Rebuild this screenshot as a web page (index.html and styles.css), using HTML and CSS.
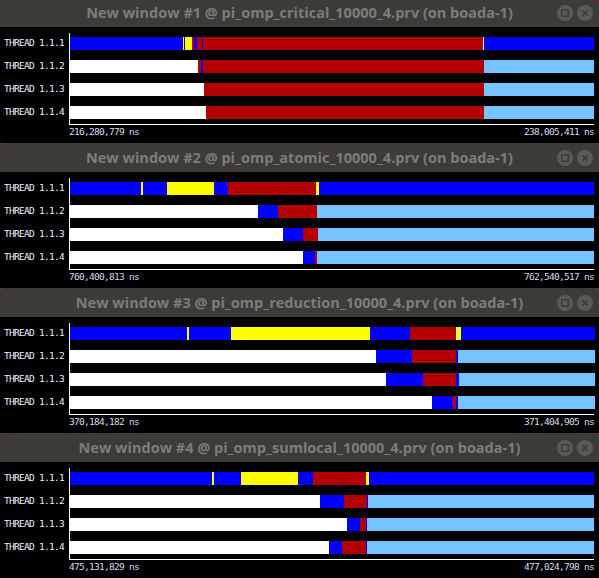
FILE: index.html
```html
<!DOCTYPE html>
<html>
<head>
<meta charset="utf-8">
<link rel="stylesheet" href="styles.css">
</head>
<body>
<div class="win first">
  <div class="titlebar"><span></span><span class="title">New window #1 @ pi_omp_critical_10000_4.prv (on boada-1)</span><span class="btns"><span class="btn"><svg viewBox="0 0 16 16"><rect x="4.75" y="4.75" width="6.5" height="6.5" fill="none" stroke="#3a3935" stroke-width="1.4"/></svg></span><span class="btn"><svg viewBox="0 0 16 16"><path d="M5.3 5.3 L10.7 10.7 M10.7 5.3 L5.3 10.7" stroke="#3a3935" stroke-width="1.4"/></svg></span></span></div>
  <div class="content">
    <div class="plot">
      <div class="labels"><div class="lbl">THREAD 1.1.1</div><div class="lbl">THREAD 1.1.2</div><div class="lbl">THREAD 1.1.3</div><div class="lbl">THREAD 1.1.4</div></div>
      <div class="chart">
        <div class="bar"><i class="b" style="width:113px"></i><i class="y" style="width:1px"></i><i class="b" style="width:1px"></i><i class="y" style="width:7px"></i><i class="r" style="width:2px"></i><i class="b" style="width:3px"></i><i class="r" style="width:5px"></i><i class="b" style="width:1px"></i><i class="r" style="width:280px"></i><i class="y" style="width:1px"></i><i class="b" style="width:110px"></i></div>
        <div class="bar"><i class="w" style="width:128px"></i><i class="r" style="width:3px"></i><i class="b" style="width:2px"></i><i class="r" style="width:281px"></i><i class="l" style="width:110px"></i></div>
        <div class="bar"><i class="w" style="width:134px"></i><i class="r" style="width:280px"></i><i class="l" style="width:110px"></i></div>
        <div class="bar"><i class="w" style="width:136px"></i><i class="r" style="width:278px"></i><i class="l" style="width:110px"></i></div>
      </div>
    </div>
    <div class="times"><span>216,280,779 ns</span><span>238,005,411 ns</span></div>
  </div>
</div>
<div class="win">
  <div class="titlebar"><span></span><span class="title">New window #2 @ pi_omp_atomic_10000_4.prv (on boada-1)</span><span class="btns"><span class="btn"><svg viewBox="0 0 16 16"><rect x="4.75" y="4.75" width="6.5" height="6.5" fill="none" stroke="#3a3935" stroke-width="1.4"/></svg></span><span class="btn"><svg viewBox="0 0 16 16"><path d="M5.3 5.3 L10.7 10.7 M10.7 5.3 L5.3 10.7" stroke="#3a3935" stroke-width="1.4"/></svg></span></span></div>
  <div class="content">
    <div class="plot">
      <div class="labels"><div class="lbl">THREAD 1.1.1</div><div class="lbl">THREAD 1.1.2</div><div class="lbl">THREAD 1.1.3</div><div class="lbl">THREAD 1.1.4</div></div>
      <div class="chart">
        <div class="bar"><i class="b" style="width:71px"></i><i class="y" style="width:2px"></i><i class="b" style="width:24px"></i><i class="y" style="width:47px"></i><i class="b" style="width:14px"></i><i class="r" style="width:88px"></i><i class="y" style="width:3px"></i><i class="b" style="width:275px"></i></div>
        <div class="bar"><i class="w" style="width:188px"></i><i class="b" style="width:20px"></i><i class="r" style="width:39px"></i><i class="l" style="width:277px"></i></div>
        <div class="bar"><i class="w" style="width:213px"></i><i class="b" style="width:20px"></i><i class="r" style="width:15px"></i><i class="l" style="width:276px"></i></div>
        <div class="bar"><i class="w" style="width:233px"></i><i class="b" style="width:12px"></i><i class="r" style="width:2px"></i><i class="l" style="width:277px"></i></div>
      </div>
    </div>
    <div class="times"><span>760,400,813 ns</span><span>762,540,517 ns</span></div>
  </div>
</div>
<div class="win">
  <div class="titlebar"><span></span><span class="title">New window #3 @ pi_omp_reduction_10000_4.prv (on boada-1)</span><span class="btns"><span class="btn"><svg viewBox="0 0 16 16"><rect x="4.75" y="4.75" width="6.5" height="6.5" fill="none" stroke="#3a3935" stroke-width="1.4"/></svg></span><span class="btn"><svg viewBox="0 0 16 16"><path d="M5.3 5.3 L10.7 10.7 M10.7 5.3 L5.3 10.7" stroke="#3a3935" stroke-width="1.4"/></svg></span></span></div>
  <div class="content">
    <div class="plot">
      <div class="labels"><div class="lbl">THREAD 1.1.1</div><div class="lbl">THREAD 1.1.2</div><div class="lbl">THREAD 1.1.3</div><div class="lbl">THREAD 1.1.4</div></div>
      <div class="chart">
        <div class="bar"><i class="b" style="width:117px"></i><i class="y" style="width:2px"></i><i class="b" style="width:42px"></i><i class="y" style="width:139px"></i><i class="b" style="width:40px"></i><i class="r" style="width:46px"></i><i class="w" style="width:1px"></i><i class="y" style="width:4px"></i><i class="b" style="width:134px"></i></div>
        <div class="bar"><i class="w" style="width:306px"></i><i class="b" style="width:36px"></i><i class="r" style="width:44px"></i><i class="b" style="width:2px"></i><i class="l" style="width:137px"></i></div>
        <div class="bar"><i class="w" style="width:316px"></i><i class="b" style="width:37px"></i><i class="r" style="width:33px"></i><i class="b" style="width:3px"></i><i class="l" style="width:136px"></i></div>
        <div class="bar"><i class="w" style="width:362px"></i><i class="b" style="width:21px"></i><i class="r" style="width:3px"></i><i class="b" style="width:2px"></i><i class="l" style="width:137px"></i></div>
      </div>
    </div>
    <div class="times"><span>370,184,182 ns</span><span>371,404,905 ns</span></div>
  </div>
</div>
<div class="win">
  <div class="titlebar"><span></span><span class="title">New window #4 @ pi_omp_sumlocal_10000_4.prv (on boada-1)</span><span class="btns"><span class="btn"><svg viewBox="0 0 16 16"><rect x="4.75" y="4.75" width="6.5" height="6.5" fill="none" stroke="#3a3935" stroke-width="1.4"/></svg></span><span class="btn"><svg viewBox="0 0 16 16"><path d="M5.3 5.3 L10.7 10.7 M10.7 5.3 L5.3 10.7" stroke="#3a3935" stroke-width="1.4"/></svg></span></span></div>
  <div class="content">
    <div class="plot">
      <div class="labels"><div class="lbl">THREAD 1.1.1</div><div class="lbl">THREAD 1.1.2</div><div class="lbl">THREAD 1.1.3</div><div class="lbl">THREAD 1.1.4</div></div>
      <div class="chart">
        <div class="bar"><i class="b" style="width:142px"></i><i class="y" style="width:2px"></i><i class="b" style="width:27px"></i><i class="y" style="width:57px"></i><i class="b" style="width:15px"></i><i class="r" style="width:53px"></i><i class="y" style="width:3px"></i><i class="b" style="width:225px"></i></div>
        <div class="bar"><i class="w" style="width:250px"></i><i class="b" style="width:24px"></i><i class="r" style="width:23px"></i><i class="b" style="width:1px"></i><i class="l" style="width:226px"></i></div>
        <div class="bar"><i class="w" style="width:277px"></i><i class="b" style="width:13px"></i><i class="r" style="width:6px"></i><i class="b" style="width:1px"></i><i class="l" style="width:227px"></i></div>
        <div class="bar"><i class="w" style="width:259px"></i><i class="b" style="width:13px"></i><i class="r" style="width:24px"></i><i class="b" style="width:1px"></i><i class="l" style="width:227px"></i></div>
      </div>
    </div>
    <div class="times"><span>475,131,829 ns</span><span>477,024,798 ns</span></div>
  </div>
</div>
</body>
</html>
```
FILE: styles.css
```css
html, body {
  margin: 0;
  padding: 0;
}
body {
  background: #7e2a36;
  width: 599px;
  height: 578px;
  overflow: hidden;
}
.win {
  width: 599px;
}
.win.first {
  margin-top: -2px;
}
.titlebar {
  height: 29px;
  background: #3c3b37;
  border-radius: 5px 5px 0 0;
  display: grid;
  grid-template-columns: 1fr auto 1fr;
  align-items: center;
}
.title {
  font-family: "Open Sans", "DejaVu Sans", sans-serif;
  font-weight: bold;
  font-size: 14.5px;
  color: #7d7c78;
  white-space: nowrap;
  line-height: 29px;
}
.btns {
  justify-self: end;
  display: flex;
  gap: 4px;
  padding-right: 6px;
}
.btn {
  width: 16px;
  height: 16px;
  border-radius: 50%;
  background: #5a5955;
  display: block;
}
.btn svg {
  display: block;
  width: 16px;
  height: 16px;
}
.content {
  height: 116px;
  background: #000;
}
.plot {
  display: flex;
  align-items: flex-start;
  padding-top: 6px;
}
.labels {
  width: 69px;
  box-sizing: border-box;
  padding: 4px 0 0 4px;
  display: flex;
  flex-direction: column;
  gap: 10px;
}
.lbl, .times {
  font-family: "DejaVu Sans Mono", monospace;
  font-size: 9.5px;
  letter-spacing: -0.72px;
  white-space: nowrap;
}
.lbl {
  height: 13px;
  line-height: 11px;
  color: #eaf2fa;
}
.chart {
  width: 524px;
  border-left: 1px solid #fff;
  border-bottom: 1px solid #fff;
  padding: 4px 0 5px 0;
  display: flex;
  flex-direction: column;
  gap: 10px;
}
.bar {
  display: flex;
  height: 13px;
}
.bar i {
  display: block;
  flex: none;
  height: 13px;
}
.bar .b { background: #0000ff; }
.bar .r { background: #b30000; }
.bar .y { background: #ffff00; }
.bar .w { background: #ffffff; }
.bar .l { background: #75c3ff; }
.times {
  display: flex;
  justify-content: space-between;
  padding: 1px 5px 0 69px;
  line-height: 11px;
  color: #d2dee9;
}
```
